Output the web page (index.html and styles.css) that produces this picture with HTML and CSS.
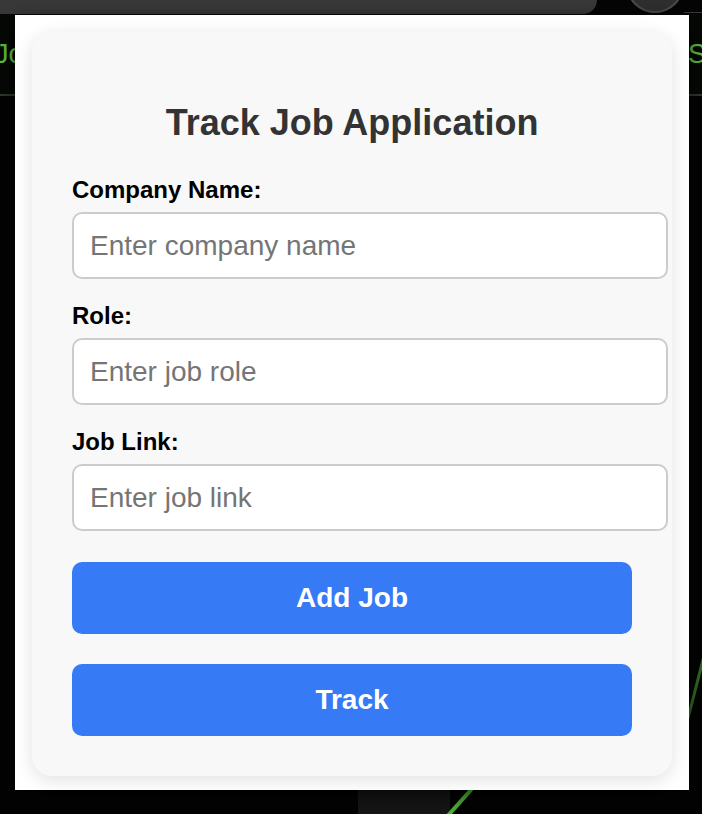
FILE: index.html
```html
<!DOCTYPE html>
<html lang="en">
<head>
<meta charset="utf-8">
<title>Track Job Application</title>
<link rel="stylesheet" href="styles.css">
</head>
<body>
<div class="page">
  <div class="topbar">
    <div class="tab"></div>
    <div class="spacer"></div>
    <div class="avatar"></div>
    <div class="tail"></div>
  </div>
  <nav class="nav">
    <span class="brand">Jobs</span>
    <span class="navlink">S</span>
  </nav>
  <div class="hero">
    <svg class="hero-art" width="702" height="718" viewBox="0 0 702 718" aria-hidden="true">
      <rect x="358" y="680" width="92" height="40" fill="#161616"/>
      <line x1="444" y1="724" x2="478" y2="686" stroke="#4fb334" stroke-width="4"/>
      <line x1="686" y1="630" x2="706" y2="552" stroke="#2f6d22" stroke-width="3"/>
    </svg>
  </div>
</div>

<div class="popup">
  <form class="card">
    <h2 class="title">Track Job Application</h2>
    <label class="label" for="company">Company Name:</label>
    <input class="field" id="company" type="text" placeholder="Enter company name">
    <label class="label" for="role">Role:</label>
    <input class="field" id="role" type="text" placeholder="Enter job role">
    <label class="label" for="link">Job Link:</label>
    <input class="field" id="link" type="text" placeholder="Enter job link">
    <button class="btn btn-add" type="button">Add Job</button>
    <button class="btn" type="button">Track</button>
  </form>
</div>
</body>
</html>
```

FILE: styles.css
```css
* { margin: 0; }

html, body {
  height: 100%;
}

body {
  margin: 0;
  background: #050505;
  font-family: "Liberation Sans", Arial, sans-serif;
  overflow: hidden;
  position: relative;
}

/* background page (behind the popup) */
.page {
  display: flex;
  flex-direction: column;
  height: 814px;
}

.topbar {
  display: flex;
  height: 14px;
  overflow: hidden;
  flex: 0 0 auto;
}

.tab {
  width: 597px;
  height: 14px;
  background: #393939;
  border-bottom-right-radius: 18px;
}

.spacer {
  width: 29px;
}

.avatar {
  width: 58px;
  height: 58px;
  margin-top: -45px;
  border-radius: 50%;
  background: #2f2f2f;
  box-shadow: inset 0 0 0 2px #4a4a4a;
}

.tail {
  flex: 1;
  border-bottom: 1px solid #3a3a3a;
  height: 12px;
}

.nav {
  display: flex;
  justify-content: space-between;
  align-items: center;
  height: 80px;
  border-bottom: 2px solid #2d3a2b;
  background: #060806;
  color: #5ec33b;
  font-size: 27px;
  flex: 0 0 auto;
}

.brand {
  margin-left: -5px;
}

.navlink {
  width: 14px;
  overflow: hidden;
}

.hero {
  flex: 1;
  background: #030303;
}

.hero-art {
  display: block;
}

/* popup window */
.popup {
  position: absolute;
  top: 15px;
  left: 15px;
  width: 673.5px;
  height: 775px;
  background: #ffffff;
  box-shadow: 0 6px 20px rgba(0, 0, 0, 0.6);
  padding: 17px;
  box-sizing: border-box;
}

.card {
  width: 640px;
  box-sizing: border-box;
  padding: 40px;
  background: #f8f8f8;
  border-radius: 20px;
  box-shadow: 0 4px 18px rgba(0, 0, 0, 0.12);
  display: flex;
  flex-direction: column;
  align-items: flex-start;
}

.title {
  align-self: stretch;
  text-align: center;
  font-size: 36px;
  line-height: 40px;
  font-weight: bold;
  color: #333333;
  margin: 31px 0 33px;
}

.label {
  display: block;
  font-size: 24px;
  line-height: 28px;
  font-weight: bold;
  color: #000000;
  margin-bottom: 8px;
}

.field {
  display: block;
  box-sizing: content-box;
  width: 560px;
  padding: 15.5px 16px;
  line-height: 32px;
  height: 32px;
  font-size: 28px;
  font-family: "Liberation Sans", Arial, sans-serif;
  border: 2px solid #cccccc;
  border-radius: 10px;
  background: #ffffff;
  color: #222;
  margin-bottom: 23px;
  outline: none;
}

.field::placeholder {
  color: #757575;
}

.btn {
  display: block;
  width: 560px;
  height: 72px;
  border: none;
  border-radius: 10px;
  background: #367af6;
  color: #ffffff;
  font-family: "Liberation Sans", Arial, sans-serif;
  font-size: 28px;
  font-weight: bold;
  padding: 0;
  cursor: pointer;
}

.btn-add {
  margin-top: 8px;
  margin-bottom: 30px;
}
```
